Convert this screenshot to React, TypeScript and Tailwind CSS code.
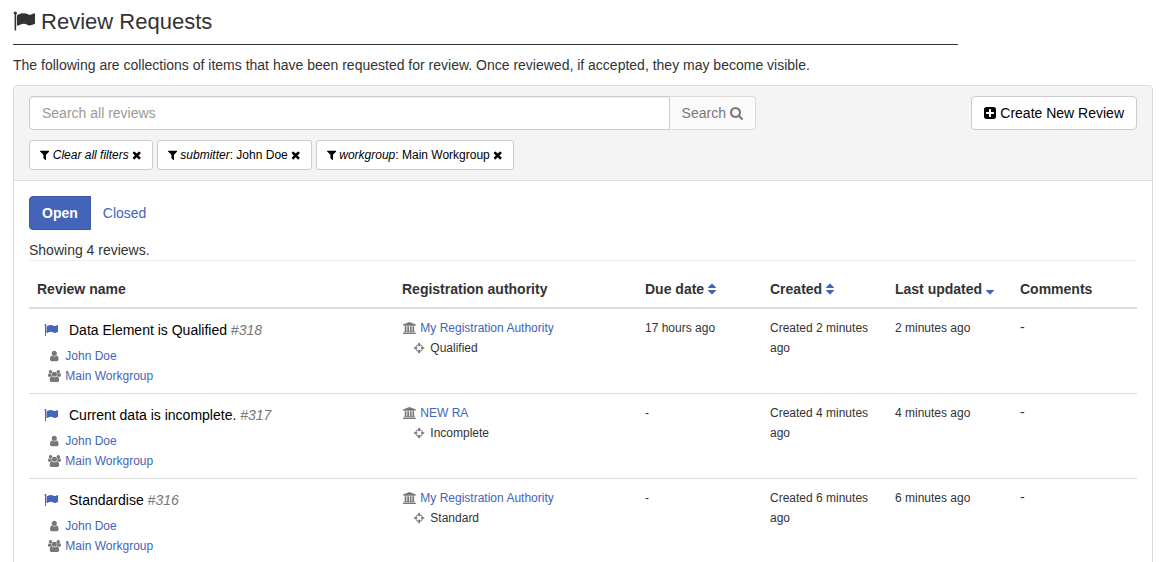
import React from 'react';

// [viewBox, path] for each glyph
const ICONS = {
  flag: ['0 0 1792 1792', 'M320 256q0 72-64 110v1266q0 13-9.5 22.5t-22.5 9.5h-64q-13 0-22.5-9.5t-9.5-22.5v-1266q-64-38-64-110 0-53 37.5-90.5t90.5-37.5 90.5 37.5 37.5 90.5zm1472 64v763q0 25-12.5 38.5t-39.5 27.5q-215 116-369 116-61 0-123.5-22t-108.5-48-115.5-48-142.5-22q-192 0-464 146-17 9-33 9-26 0-45-19t-19-45v-742q0-32 31-55 21-14 79-43 236-120 421-120 107 0 200 29t219 88q38 19 88 19 54 0 117.5-21t110-47 88-47 54.5-21q26 0 45 19t19 45z'],
  filter: ['192 0 1408 1792', 'M1595 295q17 41-14 70l-493 493v742q0 42-39 59-13 5-25 5-27 0-45-19l-256-256q-19-19-19-45v-486l-493-493q-31-29-14-70 17-39 59-39h1280q42 0 59 39z'],
  times: ['192 0 1408 1792', 'M1490 1322q0 40-28 68l-136 136q-28 28-68 28t-68-28l-294-294-294 294q-28 28-68 28t-68-28l-136-136q-28-28-28-68t28-68l294-294-294-294q-28-28-28-68t28-68l136-136q28-28 68-28t68 28l294 294 294-294q28-28 68-28t68 28l136 136q28 28 28 68t-28 68l-294 294 294 294q28 28 28 68z'],
  search: ['64 0 1664 1792', 'M1216 832q0-185-131.5-316.5t-316.5-131.5-316.5 131.5-131.5 316.5 131.5 316.5 316.5 131.5 316.5-131.5 131.5-316.5zm512 832q0 52-38 90t-90 38q-54 0-90-38l-343-342q-179 124-399 124-143 0-273.5-55.5t-225-150-150-225-55.5-273.5 55.5-273.5 150-225 225-150 273.5-55.5 273.5 55.5 225 150 150 225 55.5 273.5q0 220-124 399l343 343q37 37 37 90z'],
  plusSquare: ['128 0 1536 1792', 'M1408 960v-128q0-26-19-45t-45-19h-320v-320q0-26-19-45t-45-19h-128q-26 0-45 19t-19 45v320h-320q-26 0-45 19t-19 45v128q0 26 19 45t45 19h320v320q0 26 19 45t45 19h128q26 0 45-19t19-45v-320h320q26 0 45-19t19-45zm256-544v960q0 119-84.5 203.5t-203.5 84.5h-960q-119 0-203.5-84.5t-84.5-203.5v-960q0-119 84.5-203.5t203.5-84.5h960q119 0 203.5 84.5t84.5 203.5z'],
  user: ['256 0 1280 1792', 'M1536 1399q0 109-62.5 187t-150.5 78h-854q-88 0-150.5-78t-62.5-187q0-85 8.5-160.5t31.5-152 58.5-131 94-89 134.5-34.5q131 128 313 128t313-128q76 0 134.5 34.5t94 89 58.5 131 31.5 152 8.5 160.5zm-256-887q0 159-112.5 271.5t-271.5 112.5-271.5-112.5-112.5-271.5 112.5-271.5 271.5-112.5 271.5 112.5 112.5 271.5z'],
  users: ['64 0 1920 1792', 'M657 896q-162 5-265 128h-134q-82 0-138-40.5t-56-118.5q0-353 124-353 6 0 43.5 21t97.5 42.5 119 21.5q67 0 133-23-5 37-5 66 0 159 90 293zm1071 637q0 120-73 189.5t-194 69.5h-874q-121 0-194-69.5t-73-189.5q0-53 3.5-103.5t14-109 26.5-108.5 43-97.5 62-81 85.5-53.5 111.5-20q10 0 43 21.5t73 48 107 48 135 21.5 135-21.5 107-48 73-48 43-21.5q61 0 111.5 20t85.5 53.5 62 81 43 97.5 26.5 108.5 14 109 3.5 103.5zm-1024-1277q0 106-75 181t-181 75-181-75-75-181 75-181 181-75 181 75 75 181zm704 384q0 159-112.5 271.5t-271.5 112.5-271.5-112.5-112.5-271.5 112.5-271.5 271.5-112.5 271.5 112.5 112.5 271.5zm576 225q0 78-56 118.5t-138 40.5h-134q-103-123-265-128 90-134 90-293 0-29-5-66 66 23 133 23 59 0 119-21.5t97.5-42.5 43.5-21q124 0 124 353zm-128-609q0 106-75 181t-181 75-181-75-75-181 75-181 181-75 181 75 75 181z'],
  university: ['0 0 1920 1792', 'M960 0l960 384v128h-128q0 26-20.5 45t-48.5 19h-1526q-28 0-48.5-19t-20.5-45h-128v-128zm-704 640h256v768h128v-768h256v768h128v-768h256v768h128v-768h256v768h59q28 0 48.5 19t20.5 45v64h-1664v-64q0-26 20.5-45t48.5-19h59v-768zm1595 960q28 0 48.5 19t20.5 45v128h-1920v-128q0-26 20.5-45t48.5-19h1782z'],
  crosshairs: ['128 0 1536 1792', 'M1325 1024h-109q-26 0-45-19t-19-45v-128q0-26 19-45t45-19h109q-32-108-112.5-188.5t-188.5-112.5v109q0 26-19 45t-45 19h-128q-26 0-45-19t-19-45v-109q-108 32-188.5 112.5t-112.5 188.5h109q26 0 45 19t19 45v128q0 26-19 45t-45 19h-109q32 108 112.5 188.5t188.5 112.5v-109q0-26 19-45t45-19h128q26 0 45 19t19 45v109q108-32 188.5-112.5t112.5-188.5zm339-192v128q0 26-19 45t-45 19h-143q-37 161-154.5 278.5t-278.5 154.5v143q0 26-19 45t-45 19h-128q-26 0-45-19t-19-45v-143q-161-37-278.5-154.5t-154.5-278.5h-143q-26 0-45-19t-19-45v-128q0-26 19-45t45-19h143q37-161 154.5-278.5t278.5-154.5v-143q0-26 19-45t45-19h128q26 0 45 19t19 45v143q161 37 278.5 154.5t154.5 278.5h143q26 0 45 19t19 45z'],
  sort: ['384 0 1024 1792', 'M1408 1088q0 26-19 45l-448 448q-19 19-45 19t-45-19l-448-448q-19-19-19-45t19-45 45-19h896q26 0 45 19t19 45zm0-384q0 26-19 45t-45 19h-896q-26 0-45-19t-19-45 19-45l448-448q19-19 45-19t45 19l448 448q19 19 19 45z'],
  sortDown: ['384 0 1024 1792', 'M1408 1088q0 26-19 45l-448 448q-19 19-45 19t-45-19l-448-448q-19-19-19-45t19-45 45-19h896q26 0 45 19t19 45z'],
};

type IconName = keyof typeof ICONS;

const Icon: React.FC<{ name: IconName; className?: string }> = ({ name, className = '' }) => (
  <svg viewBox={ICONS[name][0]} className={`inline-block h-[1em] w-auto align-[-0.14em] ${className}`} fill="currentColor" aria-hidden="true">
    <path d={ICONS[name][1]} />
  </svg>
);

// fixed width slot, so that the texts behind the icons line up
const FixedIcon: React.FC<{ name: IconName }> = ({ name }) => (
  <span className="inline-block w-[15px] text-center text-[#777]">
    <Icon name={name} />
  </span>
);

const Small: React.FC<{ children: React.ReactNode }> = ({ children }) => (
  <small className="text-xs leading-4">{children}</small>
);

const filters = [
  { label: 'Clear all filters', value: '' },
  { label: 'submitter', value: 'John Doe' },
  { label: 'workgroup', value: 'Main Workgroup' },
];

const columns: { title: string; width: string; sort?: IconName }[] = [
  { title: 'Review name', width: 'w-[365px]' },
  { title: 'Registration authority', width: 'w-[243px]' },
  { title: 'Due date', width: '', sort: 'sort' },
  { title: 'Created', width: '', sort: 'sort' },
  { title: 'Last updated', width: '', sort: 'sortDown' },
  { title: 'Comments', width: '' },
];

const reviews = [
  { id: 318, title: 'Data Element is Qualified', authority: 'My Registration Authority', status: 'Qualified', due: '17 hours ago', age: '2 minutes ago' },
  { id: 317, title: 'Current data is incomplete.', authority: 'NEW RA', status: 'Incomplete', due: '-', age: '4 minutes ago' },
  { id: 316, title: 'Standardise', authority: 'My Registration Authority', status: 'Standard', due: '-', age: '6 minutes ago' },
];

const Filters: React.FC = () => (
  <div className="mt-2.5 flex flex-wrap gap-1">
    {filters.map((f) => (
      <button key={f.label} type="button" className="rounded-[3px] border border-[#ccc] bg-white px-2.5 py-1 text-xs leading-5 text-black">
        <Icon name="filter" /> <em>{f.label}</em>{f.value && `: ${f.value}`} <Icon name="times" />
      </button>
    ))}
  </div>
);

const ReviewTable: React.FC = () => (
  <table className="mt-2.5 w-full table-fixed">
    <thead>
      <tr className="border-b-2 border-[#ddd]">
        {columns.map((c) => (
          <th key={c.title} scope="col" className={`p-2 text-left font-bold whitespace-nowrap ${c.width}`}>
            {c.title}
            {c.sort && (
              <>
                {' '}
                <a href="#sort" aria-label={`Sort by ${c.title}`} className="text-[#4265b9]"><Icon name={c.sort} /></a>
              </>
            )}
          </th>
        ))}
      </tr>
    </thead>
    <tbody>
      {reviews.map((r) => (
        <tr key={r.id} className="border-b border-[#ddd] align-top">
          <td className="p-2">
            <div className="mb-0.5 flex h-[26px] items-center gap-[11px] pl-[7px]">
              <Icon name="flag" className="text-[#4265b9]" />
              <span>
                <a href={`#review-${r.id}`} className="text-black">{r.title}</a> <em className="text-[#777]">#{r.id}</em>
              </span>
            </div>
            <div className="pl-2.5">
              <div><Small><FixedIcon name="user" /> <a href="#user" className="text-[#4265b9]">John Doe</a></Small></div>
              <div><Small><FixedIcon name="users" /> <a href="#workgroup" className="text-[#4265b9]">Main Workgroup</a></Small></div>
            </div>
          </td>
          <td className="p-2">
            <div><Small><FixedIcon name="university" /> <a href="#authority" className="text-[#4265b9]">{r.authority}</a></Small></div>
            <div className="pl-2.5"><Small><FixedIcon name="crosshairs" /> {r.status}</Small></div>
          </td>
          <td className="p-2"><Small>{r.due}</Small></td>
          <td className="p-2"><Small>{`Created ${r.age}`}</Small></td>
          <td className="p-2"><Small>{r.age}</Small></td>
          <td className="p-2">-</td>
        </tr>
      ))}
    </tbody>
  </table>
);

export default function App() {
  return (
    <main className="bg-white pr-3 pl-[13px] font-['Liberation_Sans',Arial,sans-serif] text-sm leading-5 text-[#333]">
      <h1 className="w-[82.9%] border-b border-[#333] pt-2.5 pb-2.5 text-[22px] leading-6">
        <Icon name="flag" /> Review Requests
      </h1>
      <p className="mt-2.5">
        The following are collections of items that have been requested for review. Once reviewed, if accepted, they may become visible.
      </p>

      <section className="mt-2.5 rounded-t border border-[#ddd]">
        <div className="rounded-t border-b border-[#ddd] bg-[#f4f4f4] px-[15px] py-2.5">
          <div className="flex items-start justify-between">
            <form className="flex w-[65.6%]">
              <input
                type="text"
                aria-label="Search all reviews"
                placeholder="Search all reviews"
                className="h-[34px] min-w-0 flex-1 rounded-l border border-[#ccc] bg-white px-3 shadow-[inset_0_1px_1px_rgba(0,0,0,0.075)] placeholder:text-[#999]"
              />
              <button type="submit" disabled className="h-[34px] rounded-r border border-l-0 border-[#dadada] bg-[#fbfbfb] px-3 text-[#777]">
                Search <Icon name="search" />
              </button>
            </form>
            <button type="button" className="h-[34px] rounded border border-[#ccc] bg-white px-3 text-black">
              <Icon name="plusSquare" /> Create New Review
            </button>
          </div>
          <Filters />
        </div>

        <div className="p-[15px]">
          <nav className="flex">
            <a href="#open" className="rounded-l border border-[#3a59a8] bg-[#4464b9] px-3 py-1.5 font-bold text-white">Open</a>
            <a href="#closed" className="px-3 py-[7px] text-[#4265b9]">Closed</a>
          </nav>
          <p className="mt-2.5 border-b border-[#eee]">Showing 4 reviews.</p>
          <ReviewTable />
        </div>
      </section>
    </main>
  );
}
